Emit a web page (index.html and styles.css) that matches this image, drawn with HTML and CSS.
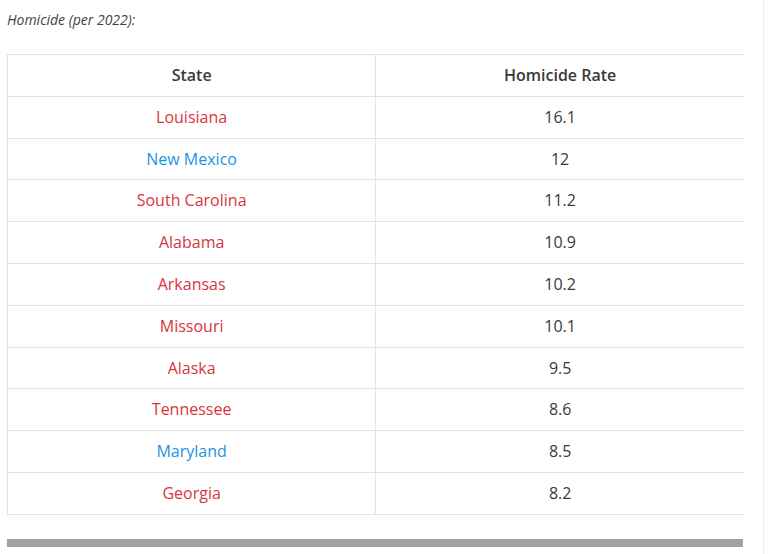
FILE: index.html
```html
<!DOCTYPE html>
<html>
<head>
<meta charset="utf-8">
<link rel="stylesheet" href="styles.css">
</head>
<body>
<div class="page">
  <p class="caption">Homicide (per 2022):</p>
  <table class="rates">
    <thead>
      <tr><th>State</th><th>Homicide Rate</th></tr>
    </thead>
    <tbody>
      <tr><td class="r">Louisiana</td><td>16.1</td></tr>
      <tr><td class="b">New Mexico</td><td>12</td></tr>
      <tr><td class="r">South Carolina</td><td>11.2</td></tr>
      <tr><td class="r">Alabama</td><td>10.9</td></tr>
      <tr><td class="r">Arkansas</td><td>10.2</td></tr>
      <tr><td class="r">Missouri</td><td>10.1</td></tr>
      <tr><td class="r">Alaska</td><td>9.5</td></tr>
      <tr><td class="r">Tennessee</td><td>8.6</td></tr>
      <tr><td class="b">Maryland</td><td>8.5</td></tr>
      <tr><td class="r">Georgia</td><td>8.2</td></tr>
    </tbody>
  </table>
  <div class="bar"></div>
</div>
</body>
</html>
```

FILE: styles.css
```css
html, body {
  margin: 0;
  padding: 0;
  background: #fff;
}
body {
  font-family: "Open Sans", "Liberation Sans", sans-serif;
  color: #3a3a3a;
}
.page {
  width: 764px;
  height: 554px;
  box-sizing: border-box;
  border-right: 1px solid #f0f0f0;
  padding: 10px 0 0 7px;
}
.caption {
  margin: 0 0 24px 0;
  font-size: 14px;
  line-height: 20px;
  font-style: italic;
  color: #444;
}
.rates {
  width: 737px;
  border-collapse: collapse;
  table-layout: fixed;
  font-size: 16px;
}
.rates th, .rates td {
  border: 1px solid #e3e3e3;
  padding: 10px 8px;
  text-align: center;
  line-height: 20.8px;
}
.rates th:last-child, .rates td:last-child {
  border-right: none;
}
.rates th {
  font-weight: 600;
  color: #3a3a3a;
}
.rates td {
  color: #3a3a3a;
}
.rates td.r { color: #d93440; }
.rates td.b { color: #1c93e3; }
.bar {
  margin-top: 24px;
  width: 736px;
  height: 8px;
  background: #a2a1a8;
}
```
